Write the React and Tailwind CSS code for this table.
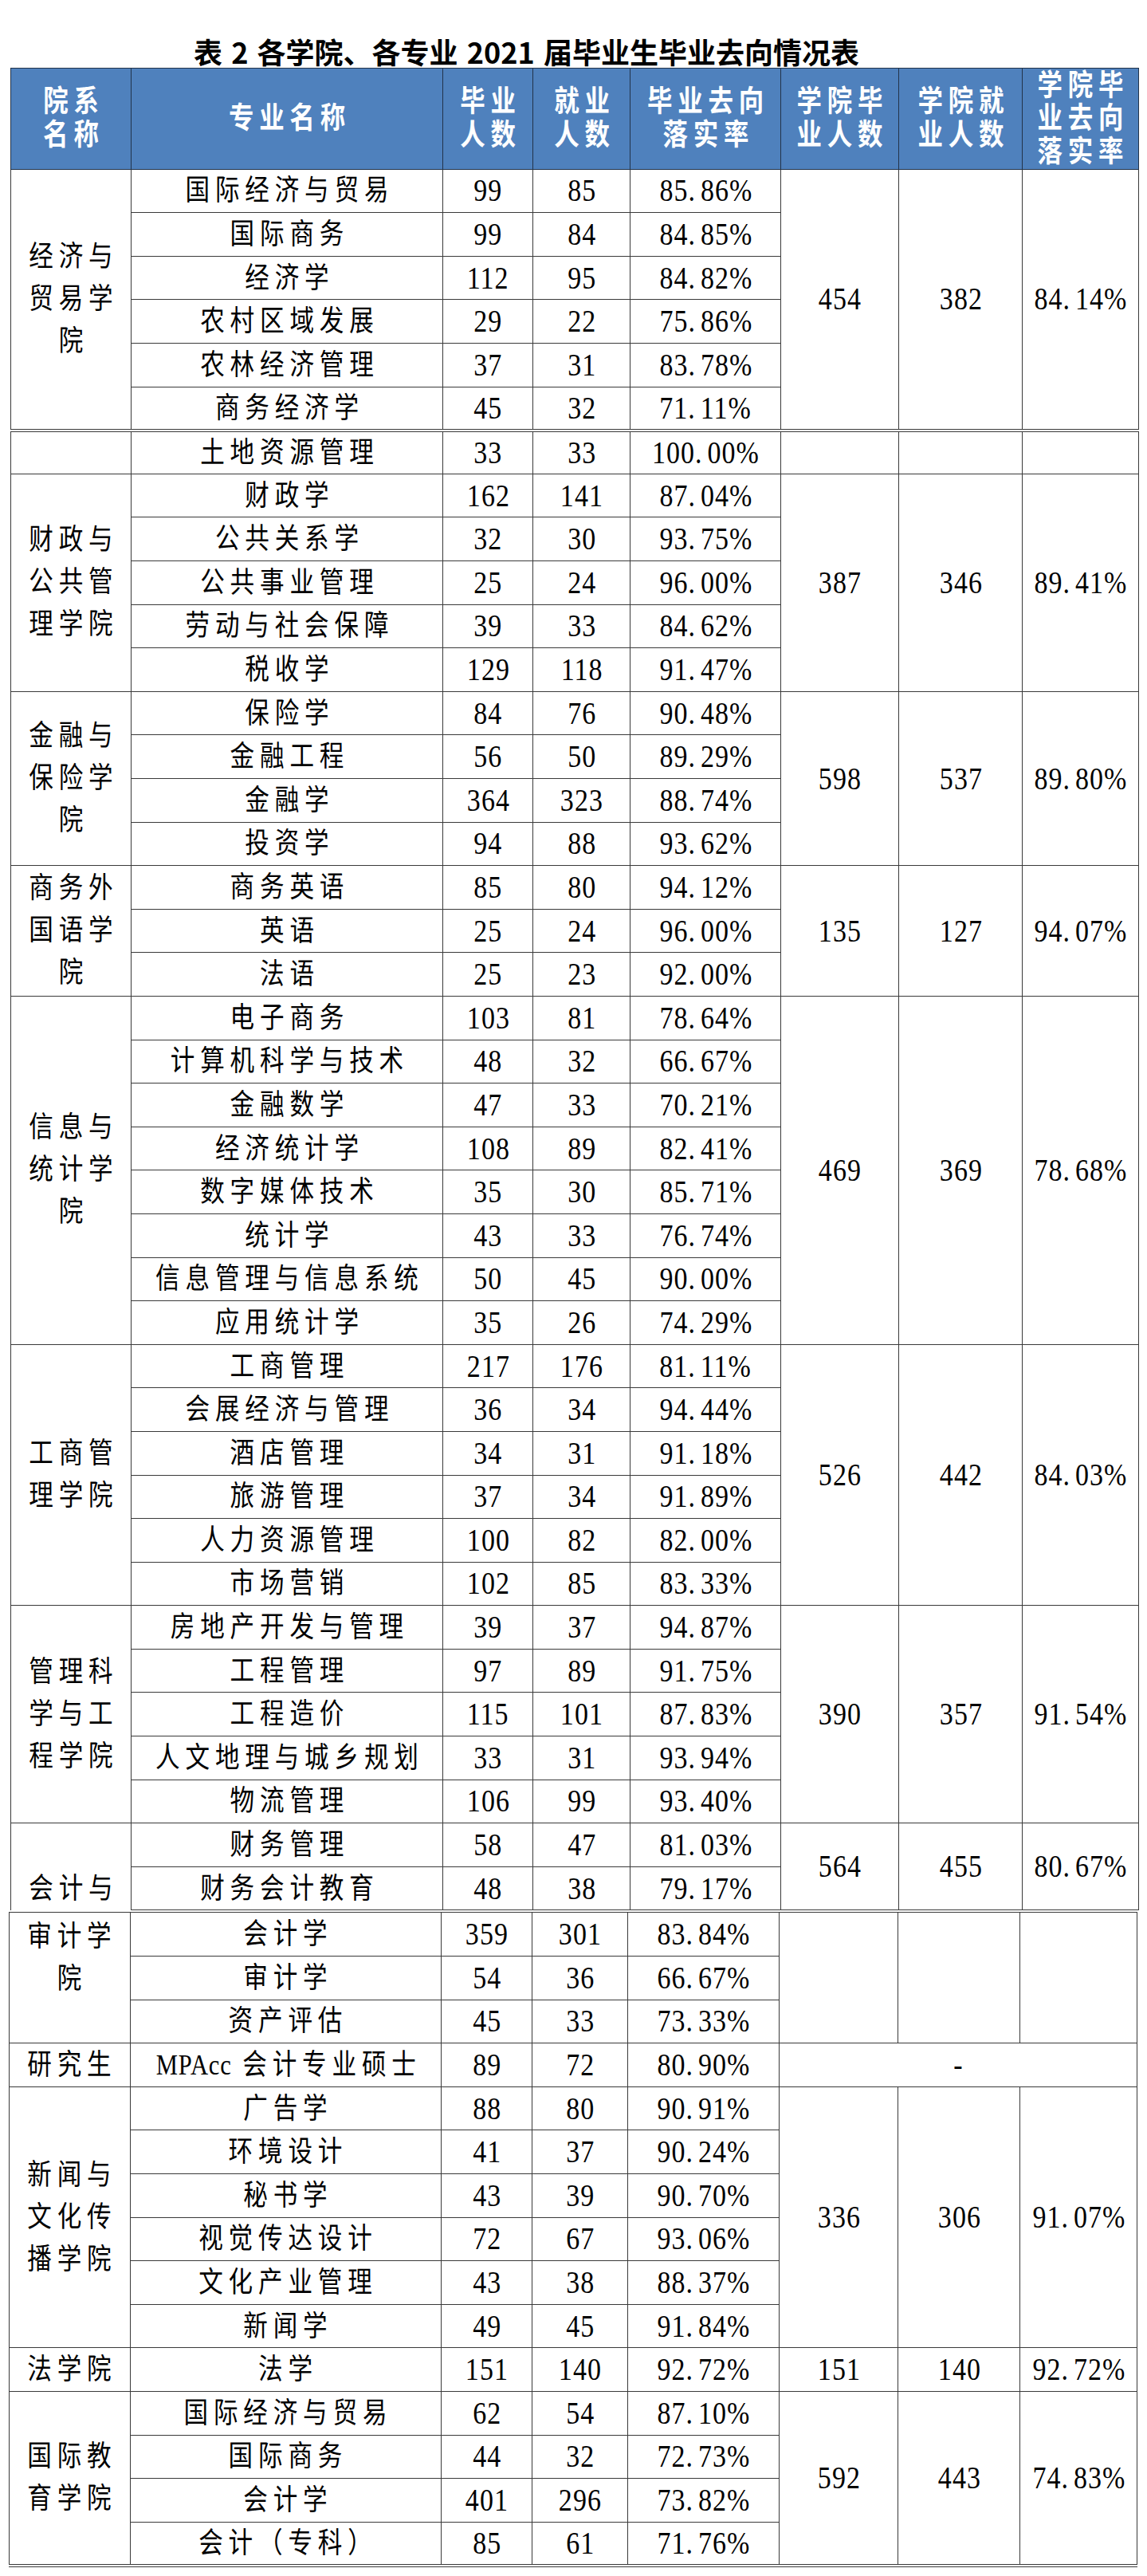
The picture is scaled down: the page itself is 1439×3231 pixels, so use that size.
import React from 'react'

const SERIF = "font-[family-name:'Liberation_Serif','Noto_Sans_CJK_SC',serif]"
const CELL = 'border border-[#3a3a3a] p-0 h-[54.6px]'
const HEAD = 'border border-[#22334a] bg-[#4f81bd] text-white p-0 h-[126.7px]'

// 院系 / 专业 / 毕业人数 / 就业人数 / 落实率 / 学院毕业 / 学院就业 / 学院落实率
const COLS_A = [151, 391, 113, 122, 189, 148, 155, 146]
const COLS_B = [152, 390, 114, 120, 190, 149, 153, 147]

const PART_A = [
  {
    name: ['经济与', '贸易学', '院'],
    rows: [
      ['国际经济与贸易', '99', '85', '85.86%'],
      ['国际商务', '99', '84', '84.85%'],
      ['经济学', '112', '95', '84.82%'],
      ['农村区域发展', '29', '22', '75.86%'],
      ['农林经济管理', '37', '31', '83.78%'],
      ['商务经济学', '45', '32', '71.11%'],
    ],
    totals: ['454', '382', '84.14%'],
  },
  {
    name: [],
    double: true,
    rows: [['土地资源管理', '33', '33', '100.00%']],
    totals: ['', '', ''],
  },
  {
    name: ['财政与', '公共管', '理学院'],
    rows: [
      ['财政学', '162', '141', '87.04%'],
      ['公共关系学', '32', '30', '93.75%'],
      ['公共事业管理', '25', '24', '96.00%'],
      ['劳动与社会保障', '39', '33', '84.62%'],
      ['税收学', '129', '118', '91.47%'],
    ],
    totals: ['387', '346', '89.41%'],
  },
  {
    name: ['金融与', '保险学', '院'],
    rows: [
      ['保险学', '84', '76', '90.48%'],
      ['金融工程', '56', '50', '89.29%'],
      ['金融学', '364', '323', '88.74%'],
      ['投资学', '94', '88', '93.62%'],
    ],
    totals: ['598', '537', '89.80%'],
  },
  {
    name: ['商务外', '国语学', '院'],
    rows: [
      ['商务英语', '85', '80', '94.12%'],
      ['英语', '25', '24', '96.00%'],
      ['法语', '25', '23', '92.00%'],
    ],
    totals: ['135', '127', '94.07%'],
  },
  {
    name: ['信息与', '统计学', '院'],
    rows: [
      ['电子商务', '103', '81', '78.64%'],
      ['计算机科学与技术', '48', '32', '66.67%'],
      ['金融数学', '47', '33', '70.21%'],
      ['经济统计学', '108', '89', '82.41%'],
      ['数字媒体技术', '35', '30', '85.71%'],
      ['统计学', '43', '33', '76.74%'],
      ['信息管理与信息系统', '50', '45', '90.00%'],
      ['应用统计学', '35', '26', '74.29%'],
    ],
    totals: ['469', '369', '78.68%'],
  },
  {
    name: ['工商管', '理学院'],
    rows: [
      ['工商管理', '217', '176', '81.11%'],
      ['会展经济与管理', '36', '34', '94.44%'],
      ['酒店管理', '34', '31', '91.18%'],
      ['旅游管理', '37', '34', '91.89%'],
      ['人力资源管理', '100', '82', '82.00%'],
      ['市场营销', '102', '85', '83.33%'],
    ],
    totals: ['526', '442', '84.03%'],
  },
  {
    name: ['管理科', '学与工', '程学院'],
    rows: [
      ['房地产开发与管理', '39', '37', '94.87%'],
      ['工程管理', '97', '89', '91.75%'],
      ['工程造价', '115', '101', '87.83%'],
      ['人文地理与城乡规划', '33', '31', '93.94%'],
      ['物流管理', '106', '99', '93.40%'],
    ],
    totals: ['390', '357', '91.54%'],
  },
  {
    name: ['会计与'],
    align: 'bottom',
    rows: [
      ['财务管理', '58', '47', '81.03%'],
      ['财务会计教育', '48', '38', '79.17%'],
    ],
    totals: ['564', '455', '80.67%'],
  },
]

const PART_B = [
  {
    name: ['审计学', '院'],
    align: 'top',
    rows: [
      ['会计学', '359', '301', '83.84%'],
      ['审计学', '54', '36', '66.67%'],
      ['资产评估', '45', '33', '73.33%'],
    ],
    totals: 'empty',
  },
  {
    name: ['研究生'],
    rows: [['MPAcc 会计专业硕士', '89', '72', '80.90%']],
    totals: 'dash',
  },
  {
    name: ['新闻与', '文化传', '播学院'],
    rows: [
      ['广告学', '88', '80', '90.91%'],
      ['环境设计', '41', '37', '90.24%'],
      ['秘书学', '43', '39', '90.70%'],
      ['视觉传达设计', '72', '67', '93.06%'],
      ['文化产业管理', '43', '38', '88.37%'],
      ['新闻学', '49', '45', '91.84%'],
    ],
    totals: ['336', '306', '91.07%'],
  },
  {
    name: ['法学院'],
    rows: [['法学', '151', '140', '92.72%']],
    totals: ['151', '140', '92.72%'],
  },
  {
    name: ['国际教', '育学院'],
    rows: [
      ['国际经济与贸易', '62', '54', '87.10%'],
      ['国际商务', '44', '32', '72.73%'],
      ['会计学', '401', '296', '73.82%'],
      ['会计（专科）', '85', '61', '71.76%'],
    ],
    totals: ['592', '443', '74.83%'],
  },
]

// the source puts a visible gap after the decimal point: "85. 86%"
function Num({ v }) {
  const dot = v.indexOf('.')
  if (dot < 0) return v
  return (
    <>
      {v.slice(0, dot)}
      <span className="mr-[7px]">.</span>
      {v.slice(dot + 1)}
    </>
  )
}

function Major({ v }) {
  if (v.startsWith('MPAcc')) {
    return (
      <>
        <span className="tracking-[1px] mr-[16px]">MPAcc</span>
        {v.slice(6)}
      </>
    )
  }
  return v
}

function Line({ children, num, lead = 'body' }) {
  let cls = 'text-[36px] tracking-[8px] pl-[8px] leading-[44px]'
  if (num) cls = 'text-[40px] tracking-[1.2px] pl-[1.2px] leading-[44px]'
  if (lead === 'head') cls = 'text-[37px] tracking-[8px] pl-[8px] leading-[41.5px]'
  if (lead === 'name') cls = 'text-[36px] tracking-[8px] pl-[8px] leading-[53px]'
  return (
    <div className="flex justify-center">
      <span className={`inline-block whitespace-nowrap scale-x-[0.85] ${SERIF} ${cls}`}>{children}</span>
    </div>
  )
}

function HeadCell({ lines }) {
  return (
    <th className={HEAD}>
      {lines.map(l => <Line key={l} lead="head">{l}</Line>)}
    </th>
  )
}

function Group({ g }) {
  const n = g.rows.length
  const top = g.double ? 'border-t-4 [border-top-style:double]' : ''
  let nameCls = 'border border-[#3a3a3a] p-0 align-middle'
  if (g.align === 'bottom') nameCls = 'border border-b-0 border-[#3a3a3a] p-0 align-bottom'
  if (g.align === 'top') nameCls = 'border border-[#3a3a3a] p-0 pt-[4px] align-top'

  return g.rows.map((r, i) => (
    <tr key={r[0]}>
      {i === 0 && (
        <td rowSpan={n} className={`${nameCls} ${top}`}>
          {g.name.map(l => <Line key={l} lead="name">{l}</Line>)}
        </td>
      )}
      <td className={`${CELL} ${i === 0 ? top : ''}`}><Line><Major v={r[0]} /></Line></td>
      <td className={`${CELL} ${i === 0 ? top : ''}`}><Line num>{r[1]}</Line></td>
      <td className={`${CELL} ${i === 0 ? top : ''}`}><Line num>{r[2]}</Line></td>
      <td className={`${CELL} ${i === 0 ? top : ''}`}><Line num><Num v={r[3]} /></Line></td>
      {i === 0 && g.totals === 'dash' && (
        <td rowSpan={n} colSpan={3} className="border border-[#3a3a3a] p-0"><Line num>-</Line></td>
      )}
      {i === 0 && g.totals === 'empty' && [0, 1, 2].map(k => (
        <td key={k} rowSpan={n} className="border border-[#3a3a3a] p-0" />
      ))}
      {i === 0 && Array.isArray(g.totals) && g.totals.map((t, k) => (
        <td key={k} rowSpan={n} className={`border border-[#3a3a3a] p-0 ${top}`}>
          {t && <Line num><Num v={t} /></Line>}
        </td>
      ))}
    </tr>
  ))
}

export default function App() {
  return (
    <div className="w-[1439px] min-h-[3231px] bg-white text-black">
      <div className="pl-[243px] pt-[46px] pb-[3px]">
        <h1 className="text-[36px] leading-[36px] font-bold [word-spacing:3px] font-[family-name:'Noto_Sans_CJK_SC',sans-serif] whitespace-nowrap">
          表 2 各学院、各专业 2021 届毕业生毕业去向情况表
        </h1>
      </div>

      <table className="ml-[13px] w-[1415px] table-fixed border-collapse">
        <colgroup>
          {COLS_A.map((w, i) => <col key={i} style={{ width: w }} />)}
        </colgroup>
        <thead>
          <tr>
            <HeadCell lines={['院系', '名称']} />
            <HeadCell lines={['专业名称']} />
            <HeadCell lines={['毕业', '人数']} />
            <HeadCell lines={['就业', '人数']} />
            <HeadCell lines={['毕业去向', '落实率']} />
            <HeadCell lines={['学院毕', '业人数']} />
            <HeadCell lines={['学院就', '业人数']} />
            <HeadCell lines={['学院毕', '业去向', '落实率']} />
          </tr>
        </thead>
        <tbody>
          {PART_A.map((g, i) => <Group key={i} g={g} />)}
        </tbody>
      </table>

      {/* page break: the 会计与审计学院 block continues in a second table */}
      <table className="ml-[11px] mt-[2px] w-[1415px] table-fixed border-collapse border-b-4 border-double border-[#3a3a3a]">
        <colgroup>
          {COLS_B.map((w, i) => <col key={i} style={{ width: w }} />)}
        </colgroup>
        <tbody>
          {PART_B.map((g, i) => <Group key={i} g={g} />)}
        </tbody>
      </table>
    </div>
  )
}
